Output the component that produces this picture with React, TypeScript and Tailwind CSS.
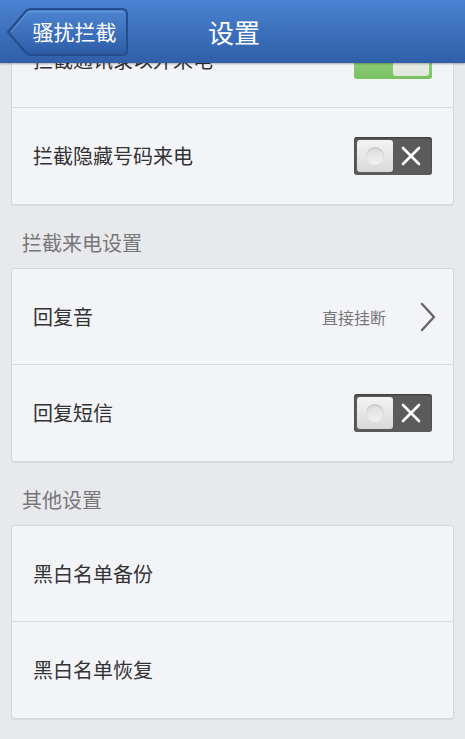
import { ReactNode } from 'react'

const font = { fontFamily: '"Noto Sans CJK SC", "Noto Sans", sans-serif' }

function ToggleOff() {
  return (
    <div className="flex h-[38px] w-[78px] items-center rounded-[3px] bg-[#5b5b5b] p-[3px] shadow-[inset_0_1px_2px_rgba(0,0,0,0.4)]">
      <div className="flex h-[32px] w-[36px] items-center justify-center rounded-[3px] bg-gradient-to-b from-[#f4f4f4] to-[#d9d9d9]">
        <div className="h-[18px] w-[18px] rounded-full bg-gradient-to-b from-[#dcdcdc] to-[#f2f2f2] shadow-[inset_0_1px_2px_rgba(0,0,0,0.15)]" />
      </div>
      <div className="flex flex-1 items-center justify-center">
        <svg width="20" height="20" viewBox="0 0 20 20">
          <path d="M2 2 L18 18 M18 2 L2 18" stroke="#ffffff" strokeWidth="2.6" strokeLinecap="round" />
        </svg>
      </div>
    </div>
  )
}

function ToggleOn() {
  return (
    <div className="flex h-[38px] w-[78px] items-center rounded-[3px] bg-gradient-to-b from-[#a8e092] to-[#78c060] p-[3px]">
      <div className="flex-1" />
      <div className="h-[32px] w-[36px] rounded-[3px] bg-gradient-to-b from-[#f4f4f4] to-[#dfe8da]" />
    </div>
  )
}

function Chevron() {
  return (
    <svg width="18" height="30" viewBox="0 0 18 30">
      <path d="M3 2 L15 15 L3 28" fill="none" stroke="#666666" strokeWidth="2.4" strokeLinecap="round" strokeLinejoin="round" />
    </svg>
  )
}

function Row({ label, right, last }: { label: string; right?: ReactNode; last?: boolean }) {
  return (
    <div
      className={
        'flex h-[96px] items-center justify-between pl-[21px] pr-[21px] ' +
        (last ? '' : 'border-b border-[#d9dade]')
      }
    >
      <span className="text-[20px] text-[#333333]">{label}</span>
      {right}
    </div>
  )
}

function Card({ children }: { children: ReactNode }) {
  return (
    <div className="mx-[11px] rounded-[3px] border border-[#d6d7db] bg-[#f3f4f8] shadow-[0_1px_1px_rgba(0,0,0,0.06)]">
      {children}
    </div>
  )
}

function SectionTitle({ text }: { text: string }) {
  return (
    <div className="flex h-[63px] items-center px-[22px] pt-[12px] text-[20px] text-[#777777]">
      {text}
    </div>
  )
}

export default function App() {
  return (
    <div className="flex h-[739px] w-[465px] flex-col overflow-hidden bg-[#e8e9ec]" style={font}>
      <header className="relative z-10 flex h-[63px] shrink-0 items-center bg-gradient-to-b from-[#4b82cf] to-[#2f5fa9] shadow-[0_1px_2px_rgba(0,0,0,0.3)]">
        <button className="relative ml-[6px] h-[50px] w-[123px]">
          <svg className="absolute inset-0" width="123" height="50" viewBox="0 0 123 50">
            <defs>
              <linearGradient id="bk" x1="0" y1="0" x2="0" y2="1">
                <stop offset="0" stopColor="#4d85d2" />
                <stop offset="1" stopColor="#2d5ca6" />
              </linearGradient>
            </defs>
            <path
              d="M2 25 L20 4 Q22 2 25 2 L116 2 Q121 2 121 7 L121 43 Q121 48 116 48 L25 48 Q22 48 20 46 Z"
              fill="url(#bk)"
              stroke="#244c8c"
              strokeWidth="2"
            />
            <path d="M5 25 L22 5 L117 5" fill="none" stroke="#7aa6e2" strokeWidth="1" opacity="0.7" />
          </svg>
          <span className="relative ml-[14px] text-[21px] text-white">骚扰拦截</span>
        </button>
        <div className="ml-[79px] text-[26px] text-white">设置</div>
      </header>

      <main className="flex-1 overflow-hidden">
        <div className="-mt-[52px]">
          <Card>
            <Row label="拦截通讯录以外来电" right={<ToggleOn />} />
            <Row label="拦截隐藏号码来电" right={<ToggleOff />} last />
          </Card>

          <SectionTitle text="拦截来电设置" />
          <Card>
            <Row
              label="回复音"
              right={
                <div className="flex items-center gap-[33px]">
                  <span className="text-[16px] text-[#777777]">直接挂断</span>
                  <div className="-mr-[5px]">
                    <Chevron />
                  </div>
                </div>
              }
            />
            <Row label="回复短信" right={<ToggleOff />} last />
          </Card>

          <SectionTitle text="其他设置" />
          <Card>
            <Row label="黑白名单备份" />
            <Row label="黑白名单恢复" last />
          </Card>
        </div>
      </main>
    </div>
  )
}
